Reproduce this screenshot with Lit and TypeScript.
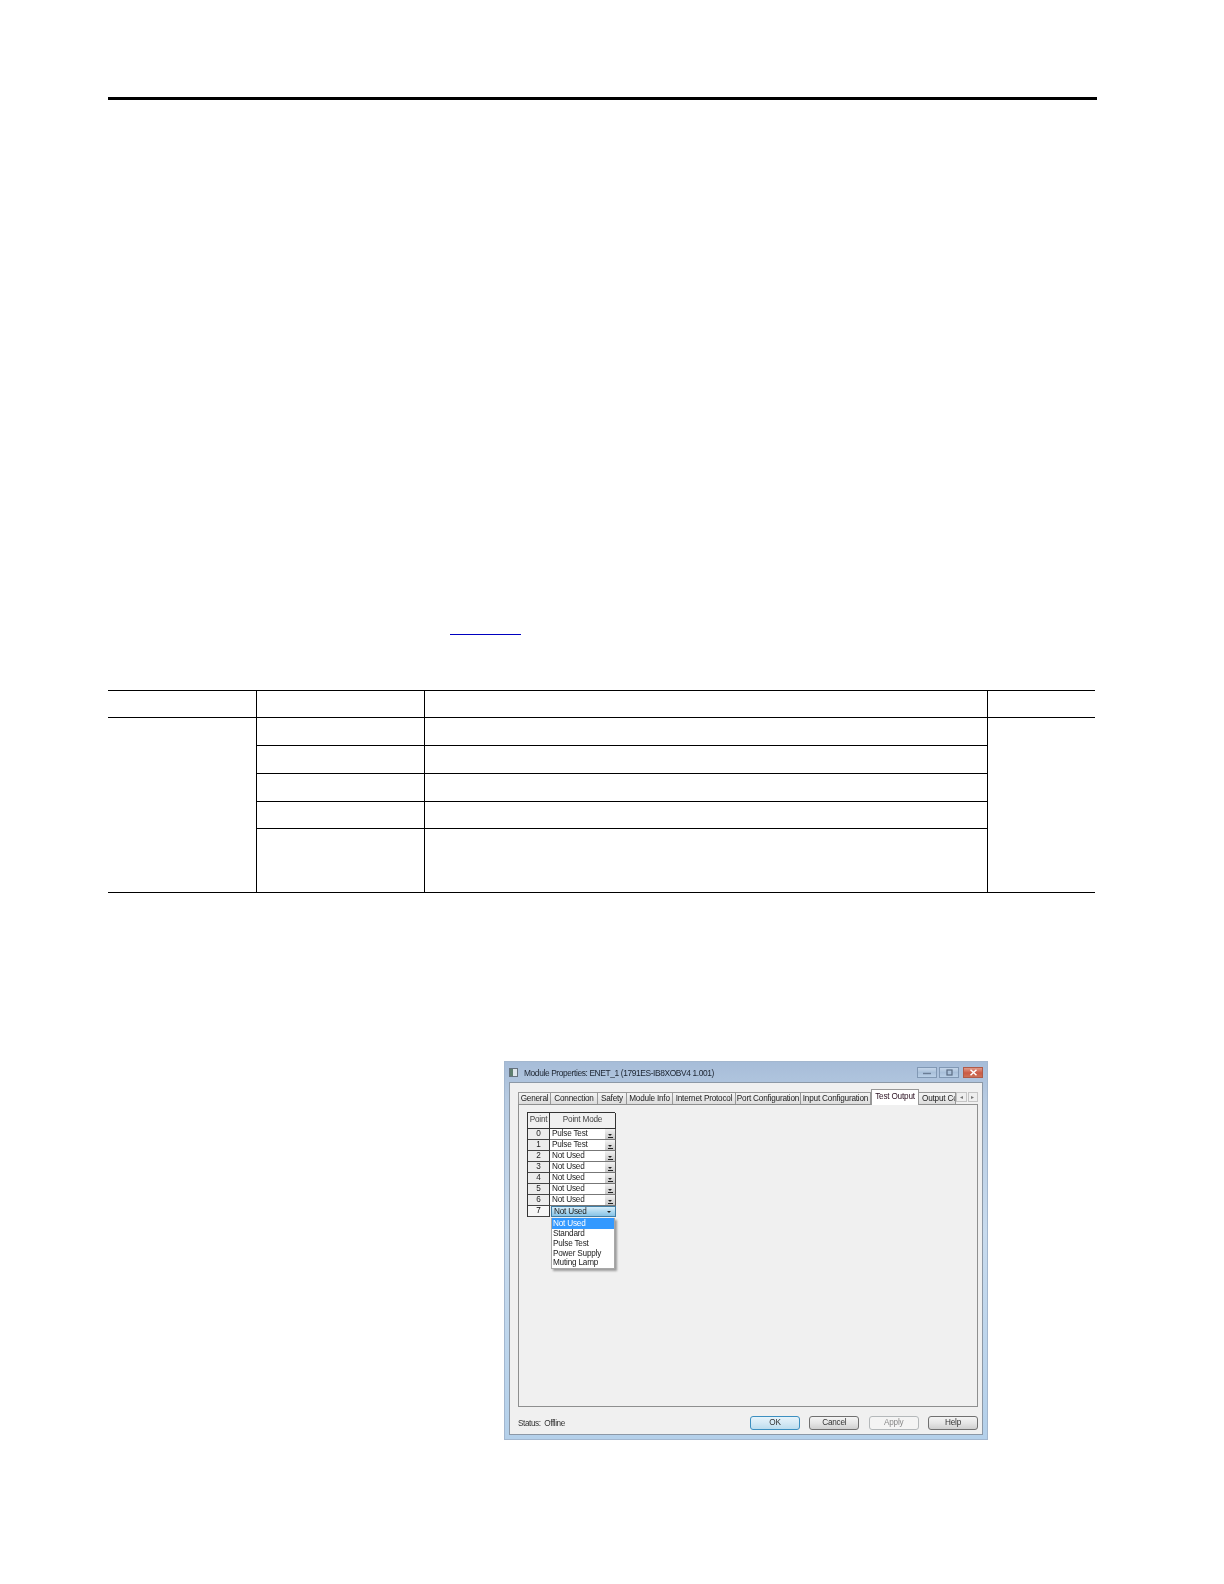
import { LitElement, html, css } from "lit";
import { customElement } from "lit/decorators.js";

const TABS = ["General", "Connection", "Safety", "Module Info", "Internet Protocol", "Port Configuration", "Input Configuration", "Test Output", "Output Co"];
const ROWS = ["Pulse Test", "Pulse Test", "Not Used", "Not Used", "Not Used", "Not Used", "Not Used", "Not Used"];
const OPTIONS = ["Not Used", "Standard", "Pulse Test", "Power Supply", "Muting Lamp"];
const ACTIVE_TAB = 7;

@customElement("app-root")
export class AppRoot extends LitElement {
  static styles = css`
    :host {
      display: block;
      width: 1224px;
      height: 1584px;
      background: #fff;
      overflow: hidden;
      font-family: "Liberation Sans", Arial, sans-serif;
      color: #222;
    }
    .page {
      display: flex;
      flex-direction: column;
      padding: 97px 0 0 108px;
    }
    .rule {
      width: 989px;
      height: 3px;
      background: #000;
    }
    .link-line {
      width: 71px;
      height: 1px;
      margin: 534px 0 0 342px;
      background: #0000c0;
    }
    table {
      margin-top: 55px;
      width: 987px;
      table-layout: fixed;
      border-collapse: collapse;
    }
    col.c1 { width: 148px; }
    col.c2 { width: 168px; }
    col.c3 { width: 563px; }
    col.c4 { width: 108px; }
    td {
      border: 1px solid #000;
      padding: 0;
    }
    tr > td:first-child { border-left: 0; }
    tr > td:last-child { border-right: 0; }
    .h27 { height: 27px; }
    .h28 { height: 28px; }
    .h64 { height: 64px; }

    .window {
      box-sizing: border-box;
      display: flex;
      flex-direction: column;
      width: 484px;
      height: 379px;
      margin: 168px 0 0 396px;
      background: linear-gradient(180deg, #a6bcd8 0%, #b7cbe2 10%, #c8dbee 45%, #b4d0ea 100%);
      box-shadow: inset 0 0 0 1px #a3b7cf;
      filter: blur(0.4px);
    }
    .title {
      display: flex;
      align-items: center;
      height: 21px;
      padding: 2px 5px 0;
      box-sizing: border-box;
      font-size: 8.4px;
      letter-spacing: -0.38px;
      color: #1c2430;
    }
    .app-icon {
      width: 9px;
      height: 9px;
      margin-right: 6px;
      background: linear-gradient(90deg, #5f7f70 0 40%, #dfe6ec 40% 100%);
      border: 1px solid #66727e;
      box-sizing: border-box;
    }
    .title-text { flex: 1; }
    .controls {
      display: flex;
      gap: 2px;
      margin-top: -1px;
    }
    .ctl {
      display: grid;
      place-items: center;
      box-sizing: border-box;
      width: 20px;
      height: 11px;
      border: 1px solid #8198b4;
      background: linear-gradient(180deg, #c4d5e9 0%, #a9c0da 50%, #b9cfe6 100%);
    }
    .ctl.close {
      margin-left: 2px;
      border-color: #b05a48;
      background: linear-gradient(180deg, #e09a89 0%, #cb5a44 55%, #cc7258 100%);
    }
    .ctl svg { display: block; }
    .client {
      box-sizing: border-box;
      flex: 1;
      margin: 0 5px 5px;
      padding: 6px 4px 0 8px;
      background: #f0f0f0;
      border: 1px solid #8c98a6;
      font-size: 8.2px;
      letter-spacing: -0.2px;
    }
    .tabs {
      display: grid;
      grid-template-columns: 33px 47px 29px 46px 63px 65px 70px 48px 37px 22px;
      height: 15px;
    }
    .tab {
      box-sizing: border-box;
      margin-top: 3px;
      height: 12px;
      line-height: 11px;
      text-align: center;
      white-space: nowrap;
      overflow: hidden;
      border: 1px solid #989898;
      border-bottom: 0;
      border-left: 0;
      background: linear-gradient(180deg, #f4f4f4, #dcdcdc);
    }
    .tab:first-child { border-left: 1px solid #989898; }
    .tab.active {
      position: relative;
      z-index: 1;
      margin-top: 0;
      height: 16px;
      line-height: 13px;
      background: #fff;
      color: #2a1020;
      border-left: 1px solid #989898;
    }
    .tab.clip {
      text-align: left;
      padding-left: 3px;
    }
    .spin {
      display: flex;
      gap: 1px;
      margin-top: 3px;
      height: 10px;
    }
    .spin span {
      flex: 1;
      display: grid;
      place-items: center;
      border: 1px solid #c4c4c4;
      background: #eee;
      color: #777;
      font-size: 6px;
      line-height: 1;
    }
    .pane {
      position: relative;
      box-sizing: border-box;
      height: 303px;
      width: 460px;
      padding: 7px 0 0 8px;
      border: 1px solid #8e8f8f;
      background: #f0f0f0;
    }
    .grid {
      display: grid;
      grid-template-columns: 22px 66px;
      grid-template-rows: 16px;
      grid-auto-rows: 11px;
      width: 88px;
      border-left: 1px solid #333;
      border-top: 1px solid #333;
      box-sizing: border-box;
    }
    .hd {
      box-sizing: border-box;
      height: 16px;
      line-height: 14px;
      text-align: center;
      color: #444;
      border-right: 1px solid #333;
      border-bottom: 1px solid #333;
      grid-row: 1;
    }
    .idx {
      box-sizing: border-box;
      line-height: 10px;
      text-align: center;
      background: #ececec;
      border-bottom: 1px solid #444;
      border-right: 1px solid #333;
    }
    .idx.cur {
      background: #f6f6f6;
      color: #000;
    }
    .combo {
      display: flex;
      align-items: stretch;
      box-sizing: border-box;
      padding-left: 2px;
      line-height: 10px;
      background: #fff;
      border-bottom: 1px solid #777;
      border-right: 1px solid #555;
    }
    .combo span { flex: 1; }
    .combo.cur {
      padding-left: 2px;
      border: 1px solid #3f7ea6;
      margin-left: 1px;
      line-height: 9px;
      background: linear-gradient(180deg, #d7edf9 0%, #a9d6ef 55%, #88c3e6 100%);
    }
    .btn {
      display: flex;
      flex-direction: column;
      align-items: center;
      justify-content: flex-end;
      width: 10px;
      padding-bottom: 1px;
      box-sizing: border-box;
      background: linear-gradient(180deg, #f2f2f2, #c8c8c8);
    }
    .tri {
      width: 0;
      height: 0;
      border: 2.5px solid transparent;
      border-top: 2.5px solid #222;
      border-bottom: 0;
    }
    .bar {
      width: 5px;
      height: 1px;
      margin-top: 1px;
      background: #222;
    }
    .combo.cur .btn {
      background: none;
      justify-content: center;
      padding-bottom: 0;
      margin-right: 1px;
    }
    .menu {
      position: absolute;
      left: 32px;
      top: 113px;
      width: 64px;
      box-sizing: border-box;
      background: #fff;
      border: 1px solid #a8a8a8;
      border-top: 0;
      box-shadow: 2px 2px 2px rgba(0, 0, 0, 0.35);
    }
    .opt {
      height: 9.8px;
      line-height: 9.8px;
      padding-left: 1px;
      color: #222;
    }
    .opt.sel {
      height: 11px;
      line-height: 11px;
      background: #3399ff;
      color: #fff;
    }
    .footer {
      display: flex;
      align-items: center;
      height: 14px;
      margin: 9px 0 0;
      width: 460px;
      color: #333;
    }
    .status { flex: 1; white-space: pre; letter-spacing: -0.42px; }
    .buttons {
      display: flex;
      gap: 9.33px;
    }
    .b {
      box-sizing: border-box;
      width: 50px;
      height: 14px;
      line-height: 12px;
      text-align: center;
      border: 1px solid #707070;
      border-radius: 3px;
      background: linear-gradient(180deg, #f4f4f4 0%, #e6e6e6 50%, #cfcfcf 100%);
    }
    .b.ok {
      border-color: #3c8fc0;
      background: linear-gradient(180deg, #e6f3fa 0%, #d5e9f5 50%, #bcdcee 100%);
    }
    .b.off {
      border-color: #b4b8ba;
      color: #8a8a8a;
      background: #f4f4f4;
    }
  `;

  render() {
    return html`
      <div class="page">
        <div class="rule"></div>
        <div class="link-line"></div>
        <table>
          <colgroup><col class="c1" /><col class="c2" /><col class="c3" /><col class="c4" /></colgroup>
          <tr class="h27"><td></td><td></td><td></td><td></td></tr>
          <tr class="h28"><td rowspan="5"></td><td></td><td></td><td rowspan="5"></td></tr>
          <tr class="h28"><td></td><td></td></tr>
          <tr class="h28"><td></td><td></td></tr>
          <tr class="h27"><td></td><td></td></tr>
          <tr class="h64"><td></td><td></td></tr>
        </table>

        <div class="window">
          <div class="title">
            <div class="app-icon"></div>
            <div class="title-text">Module Properties: ENET_1 (1791ES-IB8XOBV4 1.001)</div>
            <div class="controls">
              <div class="ctl">
                <svg width="10" height="5" viewBox="0 0 10 5"><path d="M1 3.5h8" stroke="#6a7d95" stroke-width="1.4" /></svg>
              </div>
              <div class="ctl">
                <svg width="7" height="7" viewBox="0 0 7 7"><rect x="1" y="1" width="5" height="5" fill="none" stroke="#5a6c83" stroke-width="1.2" /></svg>
              </div>
              <div class="ctl close">
                <svg width="9" height="7" viewBox="0 0 9 7"><path d="M1.5 .8L7.5 6.2M7.5 .8L1.5 6.2" stroke="#fff" stroke-width="1.5" /></svg>
              </div>
            </div>
          </div>
          <div class="client">
            <div class="tabs">
              ${TABS.map(
                (t, i) =>
                  html`<div class="tab ${i === ACTIVE_TAB ? "active" : ""} ${t === "Output Co" ? "clip" : ""}">${t}</div>`
              )}
              <div class="spin"><span>◂</span><span>▸</span></div>
            </div>
            <div class="pane">
              <div class="grid">
                <div class="hd">Point</div>
                <div class="hd">Point Mode</div>
                ${ROWS.map((r, i) => {
                  const cur = i === ROWS.length - 1;
                  return html`
                    <div class="idx ${cur ? "cur" : ""}">${i}</div>
                    <div class="combo ${cur ? "cur" : ""}">
                      <span>${r}</span>
                      <div class="btn"><div class="tri"></div>${cur ? "" : html`<div class="bar"></div>`}</div>
                    </div>
                  `;
                })}
              </div>
              <div class="menu">
                ${OPTIONS.map((o, i) => html`<div class="opt ${i === 0 ? "sel" : ""}">${o}</div>`)}
              </div>
            </div>
            <div class="footer">
              <div class="status">Status:  Offline</div>
              <div class="buttons">
                <div class="b ok">OK</div>
                <div class="b">Cancel</div>
                <div class="b off">Apply</div>
                <div class="b">Help</div>
              </div>
            </div>
          </div>
        </div>
      </div>
    `;
  }
}
